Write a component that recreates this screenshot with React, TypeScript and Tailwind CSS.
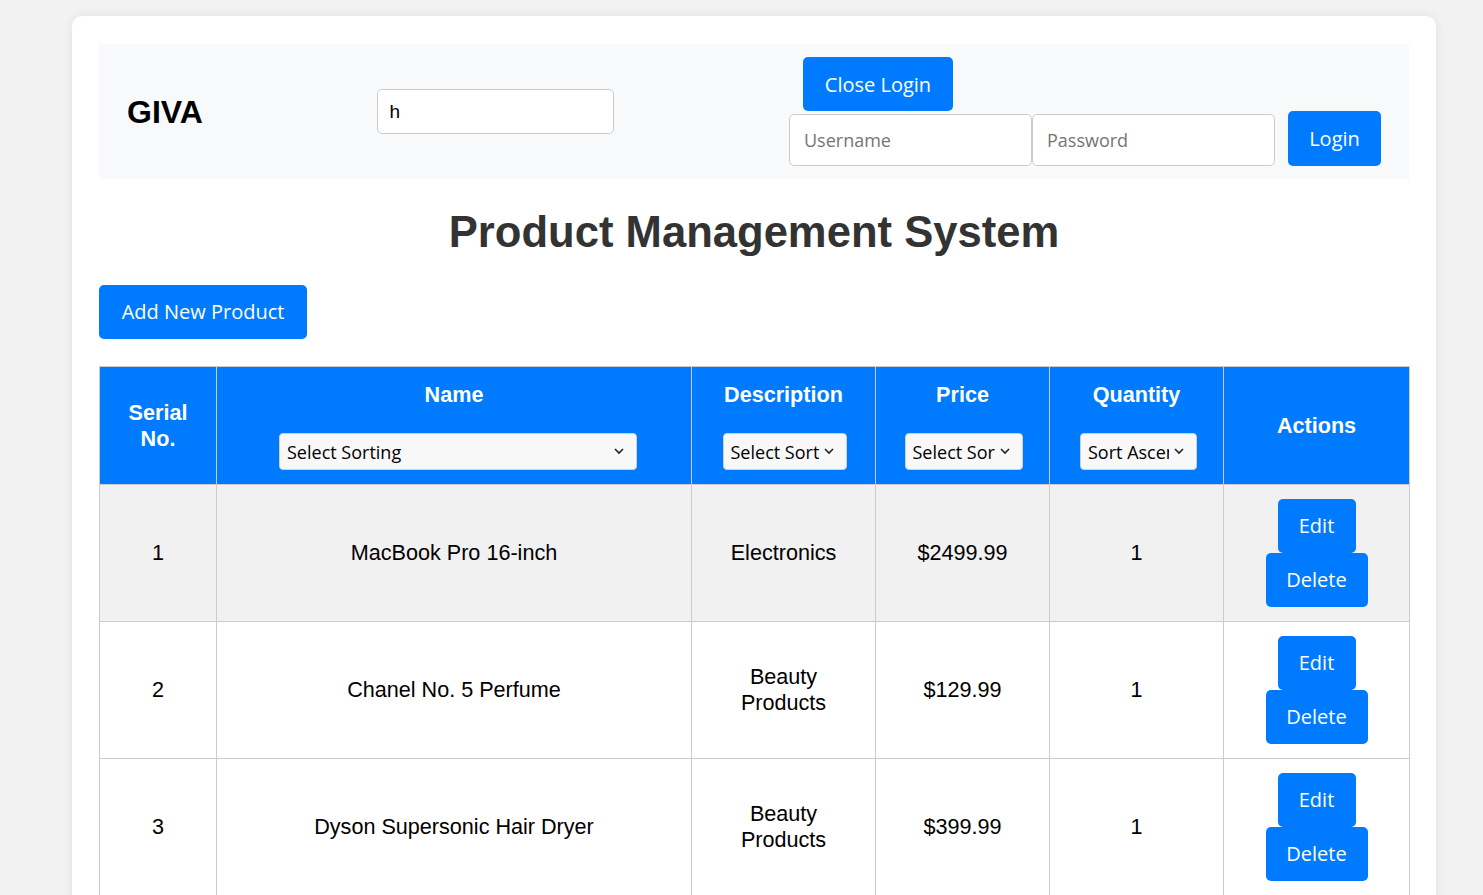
import React, { useState } from 'react'

const products = [
  { id: 1, name: 'MacBook Pro 16-inch', description: 'Electronics', price: '$2499.99', quantity: 1 },
  { id: 2, name: 'Chanel No. 5 Perfume', description: 'Beauty Products', price: '$129.99', quantity: 1 },
  { id: 3, name: 'Dyson Supersonic Hair Dryer', description: 'Beauty Products', price: '$399.99', quantity: 1 },
]

const btn =
  "bg-[#007bff] text-white rounded-[5px] h-[54px] px-[20px] flex items-center justify-center text-[20px] font-['Open_Sans',sans-serif]"

const SortSelect = ({ width, label, shift }: { width: string; label: string; shift: string }) => (
  <div className={`relative mx-auto mt-[25px] ${width} ${shift}`}>
    <select
      className="appearance-none w-full h-[37px] bg-[#f8f8f8] border border-[#d0d0d0] rounded-[4px] pl-[7px] pr-[27px] text-black text-[18px] font-['Open_Sans',sans-serif] font-normal"
      defaultValue={label}
    >
      <option>{label}</option>
      <option>Sort Ascending</option>
      <option>Sort Descending</option>
    </select>
    <svg
      className="absolute right-[13px] top-[15px] pointer-events-none"
      width="10"
      height="7"
      viewBox="0 0 10 7"
      fill="none"
    >
      <path d="M1 1l4 4 4-4" stroke="#222" strokeWidth="1.6" />
    </svg>
  </div>
)

export default function App() {
  const [search, setSearch] = useState('h')

  return (
    <div className="min-h-screen bg-[#f2f2f2] pl-[72px] pt-[16px] font-['Liberation_Sans',Arial,sans-serif]">
      <div className="w-[1364px] bg-white rounded-[10px] shadow-[0_0_10px_rgba(0,0,0,0.08)] px-[27px] pt-[28px] pb-[40px]">
        {/* Header bar */}
        <div className="bg-[#f8f9fa] h-[135px] pl-[28px] pr-[28px] flex items-center justify-between">
          <div className="text-[32px] font-bold text-black">GIVA</div>
          <input
            value={search}
            onChange={(e) => setSearch(e.target.value)}
            className="w-[237px] h-[45px] border border-[#ccc] rounded-[5px] bg-white pl-[11px] text-[19px] text-black outline-none"
          />
          <div className="flex flex-col self-stretch pt-[13px] pb-[13px]">
            <div className="pl-[14px]">
              <button className={`${btn} w-[150px] pt-[2px]`}>Close Login</button>
            </div>
            <div className="flex items-end">
              <input
                placeholder="Username"
                className="w-[243px] h-[52px] border border-[#ccc] rounded-[5px] bg-white pl-[14px] text-[18px] font-['Open_Sans',sans-serif] placeholder:text-[#757575] outline-none"
              />
              <input
                placeholder="Password"
                type="password"
                className="w-[243px] h-[52px] border border-[#ccc] rounded-[5px] bg-white pl-[14px] text-[18px] font-['Open_Sans',sans-serif] placeholder:text-[#757575] outline-none"
              />
              <button className={`${btn} w-[93px] h-[55px] ml-[13px]`}>Login</button>
            </div>
          </div>
        </div>

        <h1 className="text-center text-[43.6px] font-bold text-[#333] leading-[50px] mt-[28px] mb-[28px]">
          Product Management System
        </h1>

        <button className={`${btn} w-[208px]`}>Add New Product</button>

        <table className="w-[1310px] table-fixed border-collapse mt-[27px] text-[21.6px] leading-[26px]">
          <colgroup>
            <col className="w-[117px]" />
            <col className="w-[475px]" />
            <col className="w-[184px]" />
            <col className="w-[174px]" />
            <col className="w-[174px]" />
            <col className="w-[186px]" />
          </colgroup>
          <thead>
            <tr className="bg-[#007bff] text-white font-bold h-[118px]">
              <th className="border border-[#ccc] px-[18px] align-middle">Serial No.</th>
              <th className="border border-[#ccc] px-[18px] pt-[15px] pb-[14px] align-top">
                Name
                <SortSelect width="w-[358px]" label="Select Sorting" shift="translate-x-[4px]" />
              </th>
              <th className="border border-[#ccc] px-[10px] pt-[15px] pb-[14px] align-top">
                Description
                <SortSelect width="w-[124px]" label="Select Sorting" shift="translate-x-[1px]" />
              </th>
              <th className="border border-[#ccc] px-[10px] pt-[15px] pb-[14px] align-top">
                Price
                <SortSelect width="w-[118px]" label="Select Sorting" shift="translate-x-[1px]" />
              </th>
              <th className="border border-[#ccc] px-[10px] pt-[15px] pb-[14px] align-top">
                Quantity
                <SortSelect width="w-[117px]" label="Sort Ascending" shift="translate-x-[2px]" />
              </th>
              <th className="border border-[#ccc] px-[18px] align-middle">Actions</th>
            </tr>
          </thead>
          <tbody>
            {products.map((p, i) => (
              <tr key={p.id} className={i === 0 ? 'bg-[#f1f1f1]' : 'bg-white'}>
                <td className="border border-[#ccc] px-[18px] text-center align-middle">{p.id}</td>
                <td className="border border-[#ccc] px-[18px] text-center align-middle">{p.name}</td>
                <td className="border border-[#ccc] px-[18px] text-center align-middle">{p.description}</td>
                <td className="border border-[#ccc] px-[18px] text-center align-middle">{p.price}</td>
                <td className="border border-[#ccc] px-[18px] text-center align-middle">{p.quantity}</td>
                <td className="border border-[#ccc] px-[18px] py-[14px] align-middle">
                  <div className="flex flex-col items-center">
                    <button className={`${btn} w-[78px]`}>Edit</button>
                    <button className={`${btn} w-[102px]`}>Delete</button>
                  </div>
                </td>
              </tr>
            ))}
          </tbody>
        </table>
      </div>
    </div>
  )
}
